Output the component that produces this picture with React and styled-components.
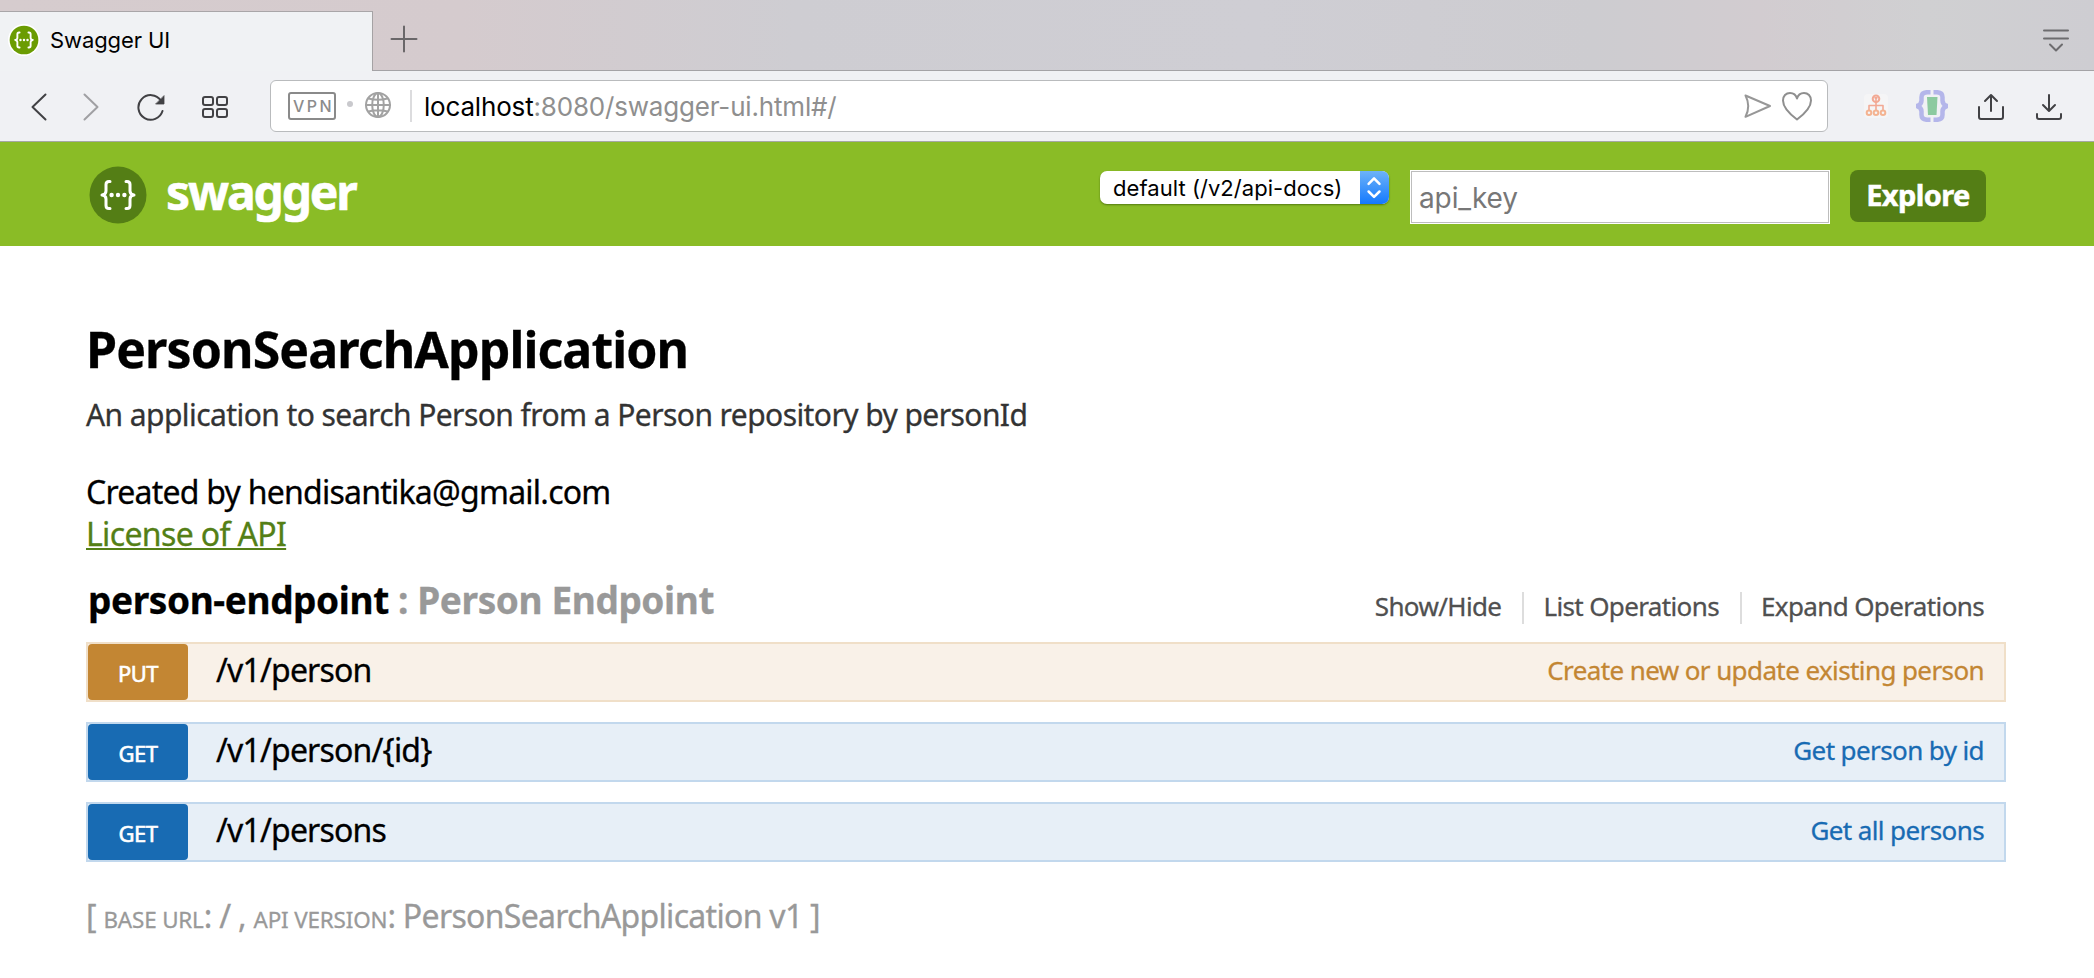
import React from 'react';
import styled, { createGlobalStyle } from 'styled-components';

const GlobalStyle = createGlobalStyle`
  *, *::before, *::after { box-sizing: border-box; }
  body { margin: 0; background: #fff; font-family: "Noto Sans", "Open Sans", sans-serif; }
`;

const ui = '"Inter", "Roboto", sans-serif';

const Page = styled.div`
  width: 2094px;
  height: 978px;
  overflow: hidden;
  display: flex;
  flex-direction: column;
`;

const TabStrip = styled.div`
  display: flex;
  align-items: flex-end;
  height: 71px;
  background: linear-gradient(90deg, #d6ccce 0, #d5cbce 22%, #cecdd2 38%, #cfced4 60%, #cdccd0 76%, #d2ccd0 84%, #d0d0d2 92%, #cecdd2 100%);
`;

const Tab = styled.div`
  display: flex;
  align-items: center;
  width: 373px;
  height: 60px;
  padding: 0 0 3px 8px;
  border-top: 1px solid #a9a6a8;
  border-right: 1px solid #a5a2a4;
  background: #f0f2f4;
`;

const TabTitle = styled.span`
  margin-left: 10px;
  font: 400 22px/30px ${ui};
  letter-spacing: -0.1px;
  color: #000;
`;

const StripRest = styled.div`
  flex: 1;
  display: flex;
  justify-content: space-between;
  align-items: center;
  height: 71px;
  padding: 8px 22px 0 15px;
  border-bottom: 1px solid #a4a3a6;
`;

const Toolbar = styled.div`
  display: flex;
  align-items: center;
  height: 71px;
  padding: 0 29px 1px 24px;
  border-bottom: 1px solid #a5a8a3;
  background: #f0f1f4;
`;

const Icon = styled.svg`
  flex: none;
  display: block;
  width: ${(p) => p.$size || 32}px;
  height: ${(p) => p.$size || 32}px;
  margin-left: ${(p) => p.$gap || 0}px;
  fill: none;
  stroke: ${(p) => p.$color || '#414144'};
  stroke-width: ${(p) => p.$weight || 2};
  stroke-linecap: round;
  stroke-linejoin: round;
`;

const AddressBar = styled.div`
  flex: 1;
  display: flex;
  align-items: center;
  height: 52px;
  margin: 0 32px 0 39px;
  padding: 0 14px 0 17px;
  border: 1px solid #b9bbbd;
  border-radius: 6px;
  background: #fff;
`;

const VpnBadge = styled.span`
  width: 48px;
  height: 28px;
  padding-left: 3px;
  border: 2px solid #8a8a8a;
  border-radius: 3px;
  font: 500 16px/25px ${ui};
  letter-spacing: 2.4px;
  text-align: center;
  color: #8c8c8c;
`;

const Dot = styled.span`
  width: 6px;
  height: 6px;
  margin: 0 9px 3px 11px;
  border-radius: 50%;
  background: #c9c9cd;
`;

const Divider = styled.span`
  width: 2px;
  height: 32px;
  margin: 0 12px 0 16px;
  background: #dcdcde;
`;

const Url = styled.span`
  flex: 1;
  padding-top: 2px;
  font: 400 26px/36px ${ui};
  letter-spacing: -0.18px;
  color: #8f8f8f;
`;

const Host = styled.span`
  color: #000;
`;

const Header = styled.header`
  display: flex;
  align-items: flex-start;
  height: 104px;
  padding: 0 108px 0 89px;
  background: #8abc26;
`;

const Brand = styled.div`
  flex: 1;
  display: flex;
  padding-top: 24px;
`;

const BrandName = styled.span`
  margin-left: 19px;
  font-size: 48px;
  font-weight: 700;
  line-height: 51px;
  letter-spacing: -2.15px;
  color: #fff;
  -webkit-text-stroke: 0.6px currentColor;
`;

const Select = styled.div`
  display: flex;
  justify-content: space-between;
  width: 289px;
  height: 33px;
  margin: 29px 21px 0 0;
  padding-left: 13px;
  border-radius: 7px;
  box-shadow: 0 1px 2px rgba(40, 70, 0, 0.55);
  background: #fff;
  overflow: hidden;
  font: 400 22px/35px ${ui};
  letter-spacing: 0.05px;
  white-space: nowrap;
`;

const SelectArrows = styled.span`
  display: flex;
  width: 29px;
  height: 33px;
  padding-top: 1px;
  background: linear-gradient(#6db3f8, #1479fe);
`;

const KeyInput = styled.input`
  width: 420px;
  height: 54px;
  margin: 28px 20px 0 0;
  padding: 2px 7px 0 8px;
  border: 1px solid #fff;
  border-radius: 0;
  outline: 1px solid #bdbdbd;
  outline-offset: -2px;
  background: #fff;
  font: 400 28px/40px ${ui};
  letter-spacing: -0.1px;
  &::placeholder { color: #777; opacity: 1; }
`;

const ExploreButton = styled.button`
  width: 136px;
  height: 52px;
  margin: 28px 0 0;
  padding: 0 0 3px;
  border: 0;
  border-radius: 8px;
  background: #547e15;
  color: #fff;
  font: 700 29px/49px "Noto Sans", sans-serif;
  letter-spacing: -0.6px;
  -webkit-text-stroke: 0.5px currentColor;
`;

const Main = styled.main`
  padding: 73px 88px 0 86px;
  -webkit-text-stroke: 0.3px currentColor;
`;

const Title = styled.h1`
  margin: 0 0 16px;
  font-size: 50px;
  line-height: 60px;
  letter-spacing: -0.9px;
  color: #000;
`;

const Description = styled.p`
  margin: 0 0 36px;
  font-size: 30px;
  line-height: 40px;
  letter-spacing: -0.57px;
  color: #333;
`;

const InfoLine = styled.div`
  font-size: 32px;
  line-height: 42px;
  letter-spacing: -0.76px;
  color: #000;
`;

const License = styled.a`
  color: #547f16;
  letter-spacing: -0.65px;
  text-decoration: underline;
  text-decoration-thickness: 2px;
  text-underline-offset: 2px;
  text-decoration-skip-ink: none;
`;

const ResourceHead = styled.div`
  display: flex;
  justify-content: space-between;
  height: 87px;
  padding: 0 22px 0 2px;
`;

const ResourceName = styled.h2`
  margin: 20px 0 0;
  font-size: 37px;
  line-height: 50px;
  letter-spacing: -0.4px;
  color: #000;
`;

const Muted = styled.span`
  color: #999;
`;

const Options = styled.ul`
  display: flex;
  margin: 37px 0 0;
  padding: 0;
  list-style: none;
`;

const Option = styled.li`
  height: 32px;
  padding: 0 21px 0 19px;
  border-left: 2px solid #ddd;
  font-size: 26px;
  line-height: 28px;
  letter-spacing: -0.63px;
  color: #505050;
  &:first-child { border-left: 0; }
  &:last-child { padding-right: 0; }
`;

const tones = {
  put: { solid: '#c38633', soft: '#f9f1e8', line: '#f0dfc8' },
  get: { solid: '#186bb3', soft: '#e7eff7', line: '#c2d8ed' },
};

const Operations = styled.div`
  display: flex;
  flex-direction: column;
  gap: 20px;
`;

const Operation = styled.div`
  display: flex;
  height: 60px;
  padding-right: 20px;
  border: 2px solid ${(p) => tones[p.$tone].line};
  background: ${(p) => tones[p.$tone].soft};
`;

const Method = styled.span`
  width: 100px;
  padding-top: 3px;
  border-radius: 4px;
  background: ${(p) => tones[p.$tone].solid};
  color: #fff;
  font-size: 22px;
  line-height: 53px;
  letter-spacing: -0.5px;
  text-align: center;
  -webkit-text-stroke: 0.6px currentColor;
`;

const Path = styled.span`
  flex: 1;
  padding-left: 28px;
  font-size: 32px;
  line-height: 51px;
  letter-spacing: -0.83px;
  color: #000;
`;

const Summary = styled.span`
  font-size: 26px;
  line-height: 52px;
  letter-spacing: -0.6px;
  color: ${(p) => tones[p.$tone].solid};
`;

const Footer = styled.footer`
  margin-top: 34px;
  font-size: 32px;
  line-height: 40px;
  letter-spacing: -0.7px;
  color: #999;
`;

const SmallCaps = styled.span`
  font-size: 22.4px;
  text-transform: uppercase;
  letter-spacing: -0.15px;
`;

const operations = [
  { tone: 'put', method: 'PUT', path: '/v1/person', summary: 'Create new or update existing person' },
  { tone: 'get', method: 'GET', path: '/v1/person/{id}', summary: 'Get person by id' },
  { tone: 'get', method: 'GET', path: '/v1/persons', summary: 'Get all persons' },
];

function SwaggerMark({ size, disc, ring }) {
  return (
    <Icon $size={size} viewBox="0 0 58 58" $color="#fff" $weight={ring ? 3.4 : 3}>
      {ring && <circle cx="29" cy="29" r="29" fill="#fff" stroke="none" />}
      <circle cx="29" cy="29" r={ring ? 26 : 28.5} fill={disc} stroke="none" />
      <path d="M21 15.500h-1q-3 0-3 3v6.500q0 3.600-4 4q4 .4 4 4v6.500q0 3 3 3h1M37 15.500h1q3 0 3 3v6.500q0 3.600 4 4q-4 .4-4 4v6.500q0 3-3 3h-1" />
      <g fill="#fff" stroke="none">
        <circle cx="22.600" cy="29" r="2.200" />
        <circle cx="29" cy="29" r="2.200" />
        <circle cx="35.400" cy="29" r="2.200" />
      </g>
    </Icon>
  );
}

function BrowserChrome() {
  return (
    <>
      <TabStrip>
        <Tab>
          <SwaggerMark size={32} disc="#6b9c02" ring />
          <TabTitle>Swagger UI</TabTitle>
        </Tab>
        <StripRest>
          <Icon viewBox="0 0 32 32" $color="#6a6769">
            <path d="M16 3.500v25M3.500 16h25" />
          </Icon>
          <Icon viewBox="0 0 32 32" $color="#6d6c6f">
            <path d="M4 7.500h24M4 15.500h24M10 21.500l6 6 6-6" />
          </Icon>
        </StripRest>
      </TabStrip>
      <Toolbar>
        <Icon viewBox="24 90 32 32">
          <path d="M45.500 94.500L32.500 107l13 12.500" />
        </Icon>
        <Icon viewBox="76 90 32 32" $gap={20} $color="#a0a0a3">
          <path d="M84.500 94.500L97.500 107l-13 12.500" />
        </Icon>
        <Icon viewBox="135 90 32 32" $gap={27}>
          <path d="M162.500 111a12.300 12.300 0 1 1-1.600-10.500" />
          <path d="M164 96v8h-8z" fill="#414144" stroke="#414144" strokeWidth="0.8" />
        </Icon>
        <Icon viewBox="199 90 32 32" $gap={32}>
          <rect x="203" y="97" width="10" height="8" rx="2" />
          <rect x="217" y="97" width="10" height="8" rx="2" />
          <rect x="203" y="109" width="10" height="8" rx="2" />
          <rect x="217" y="109" width="10" height="8" rx="2" />
        </Icon>
        <AddressBar>
          <VpnBadge>VPN</VpnBadge>
          <Dot />
          <Icon viewBox="362 90 32 32" $color="#a2a2a2">
            <circle cx="378" cy="105" r="12" />
            <ellipse cx="378" cy="105" rx="5.800" ry="12" />
            <path d="M378 93v24M366 105h24M368.500 98.500q9.500 2.400 19 0M368.500 111.500q9.500-2.400 19 0" />
          </Icon>
          <Divider />
          <Url><Host>localhost</Host>:8080/swagger-ui.html#/</Url>
          <Icon viewBox="1741 90 32 32" $color="#979797">
            <path d="M1745.500 95.500L1770 106l-24.500 10.800q5.500-10.800 0-21.300z" />
          </Icon>
          <Icon viewBox="1781 90 32 32" $gap={8} $color="#8f8f8f">
            <path d="M1797 119.500C1791 115 1783 108 1783 100.500c0-4.500 3-7.500 7-7.500 3.500 0 6 2 7 5.500 1-3.500 3.500-5.500 7-5.500 4 0 7 3 7 7.500 0 7.500-8 14.500-14 19z" />
          </Icon>
        </AddressBar>
        <Icon viewBox="1860 90 32 32" $color="#f2a994">
          <rect x="1864" y="94" width="24" height="24" rx="4" fill="#f5f5f6" stroke="none" />
          <circle cx="1876" cy="98.700" r="3.300" />
          <path d="M1875 97.500l1 1.500 1-1.500M1876 99v11.500M1869 110v-4.500h14v4.500" strokeWidth="1.600" />
          <g stroke="#f4b391">
            <circle cx="1869" cy="112.700" r="2.300" />
            <circle cx="1876" cy="112.700" r="2.300" />
            <circle cx="1883" cy="112.700" r="2.300" />
          </g>
        </Icon>
        <Icon viewBox="1916 90 32 32" $gap={24} $color="#b4b6ea" $weight="4.500">
          <g strokeLinecap="butt">
            <path d="M1930.500 92.200h-3q-6 0-6 5v3.300q0 4-4.500 5.500q4.500 1.500 4.500 5.500v3.300q0 5 6 5h3M1933.500 92.200h3q6 0 6 5v3.300q0 4 4.500 5.500q-4.500 1.500-4.500 5.500v3.300q0 5-6 5h-3" />
          </g>
          <path d="M1927 97h10.500l-1 18h-8.500z" fill="#8cca9f" stroke="none" />
        </Icon>
        <Icon viewBox="1975 90 32 32" $gap={27}>
          <path d="M1979 107v10q0 2 2 2h20q2 0 2-2v-10M1991 111V95.500M1985 101l6-6 6 6" />
        </Icon>
        <Icon viewBox="2033 90 32 32" $gap={26}>
          <path d="M2037 114v3q0 2 2 2h20q2 0 2-2v-3M2049 95v15.500M2043 105l6 6 6-6" />
        </Icon>
      </Toolbar>
    </>
  );
}

export default function App() {
  return (
    <Page>
      <GlobalStyle />
      <BrowserChrome />
      <Header>
        <Brand>
          <SwaggerMark size={58} disc="#547e15" />
          <BrandName>swagger</BrandName>
        </Brand>
        <Select>
          default (/v2/api-docs)
          <SelectArrows>
            <Icon viewBox="0 0 32 32" $size={29} $color="#fff" $weight="2.800">
              <path d="M9.500 13l6-6 6 6M9.500 21.500l6 6 6-6" />
            </Icon>
          </SelectArrows>
        </Select>
        <KeyInput placeholder="api_key" />
        <ExploreButton>Explore</ExploreButton>
      </Header>
      <Main>
        <Title>PersonSearchApplication</Title>
        <Description>An application to search Person from a Person repository by personId</Description>
        <InfoLine>Created by hendisantika@gmail.com</InfoLine>
        <InfoLine><License>License of API</License></InfoLine>
        <ResourceHead>
          <ResourceName>person-endpoint <Muted>: Person Endpoint</Muted></ResourceName>
          <Options>
            <Option>Show/Hide</Option>
            <Option>List Operations</Option>
            <Option>Expand Operations</Option>
          </Options>
        </ResourceHead>
        <Operations>
          {operations.map((op) => (
            <Operation key={op.path} $tone={op.tone}>
              <Method $tone={op.tone}>{op.method}</Method>
              <Path>{op.path}</Path>
              <Summary $tone={op.tone}>{op.summary}</Summary>
            </Operation>
          ))}
        </Operations>
        <Footer>
          [ <SmallCaps>base url</SmallCaps>: / , <SmallCaps>api version</SmallCaps>: PersonSearchApplication v1 ]
        </Footer>
      </Main>
    </Page>
  );
}
